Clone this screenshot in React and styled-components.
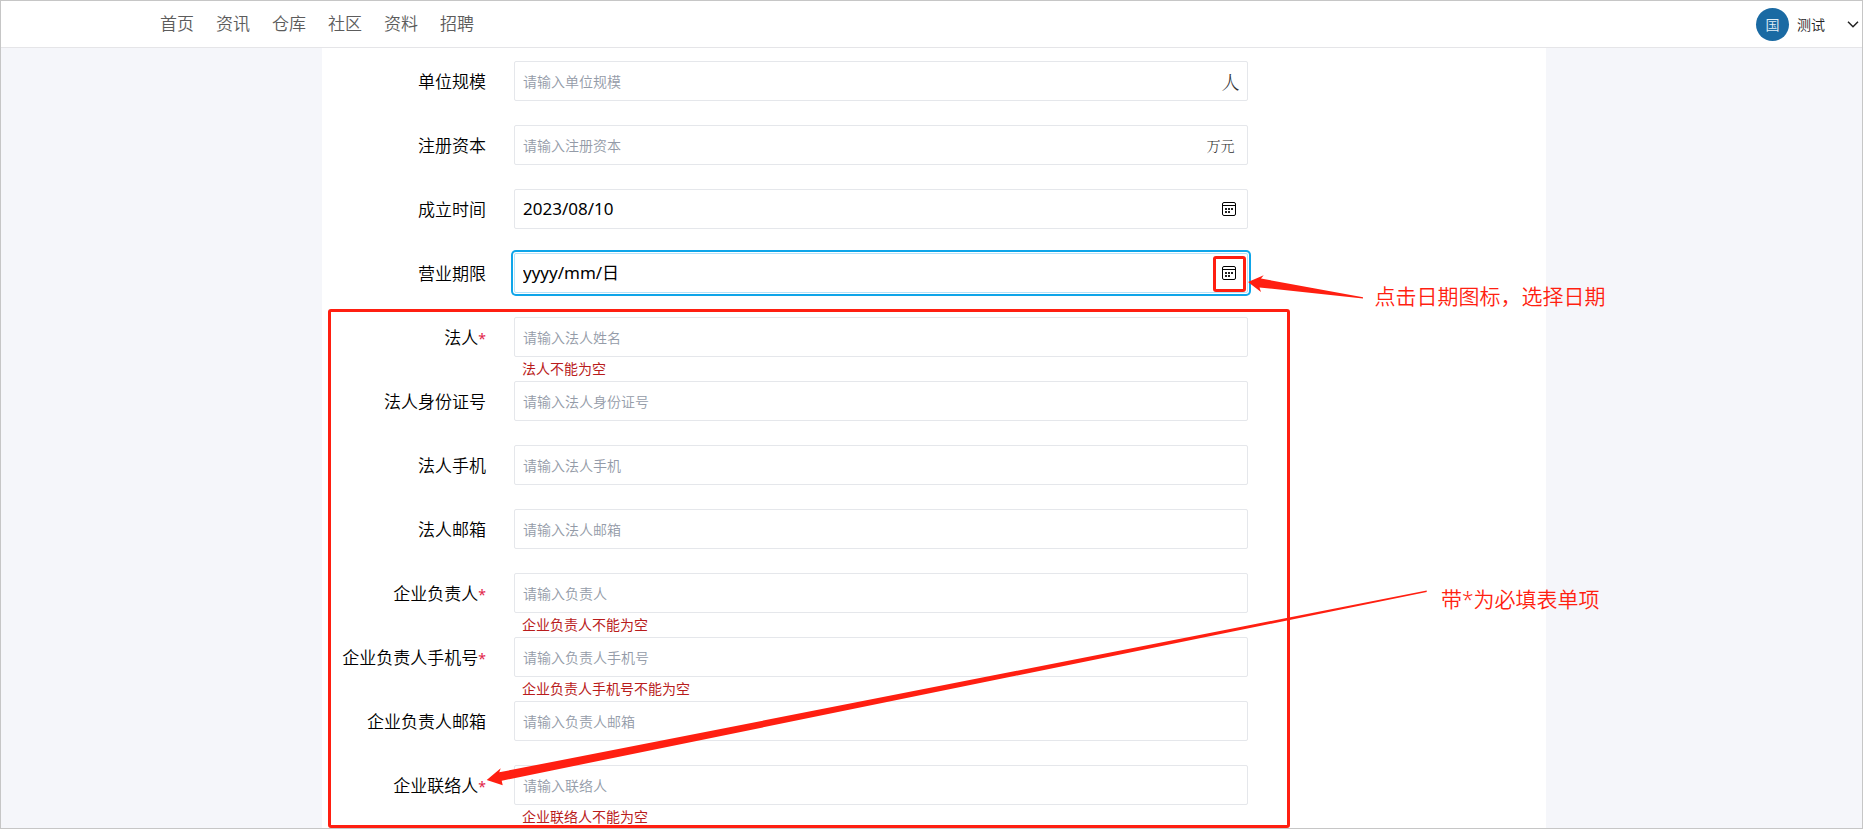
import React, { useState } from 'react';
import styled, { createGlobalStyle, css } from 'styled-components';

const NAV_ITEMS = ['首页', '资讯', '仓库', '社区', '资料', '招聘'];

const BASIC_FIELDS = [
  { id: 'scale', label: '单位规模', placeholder: '请输入单位规模', unit: '人', big: true },
  { id: 'capital', label: '注册资本', placeholder: '请输入注册资本', unit: '万元' },
];

const CONTACT_FIELDS = [
  { id: 'legal', label: '法人', placeholder: '请输入法人姓名', required: true },
  { id: 'legalId', label: '法人身份证号', placeholder: '请输入法人身份证号' },
  { id: 'legalPhone', label: '法人手机', placeholder: '请输入法人手机' },
  { id: 'legalMail', label: '法人邮箱', placeholder: '请输入法人邮箱' },
  { id: 'leader', label: '企业负责人', placeholder: '请输入负责人', required: true },
  { id: 'leaderPhone', label: '企业负责人手机号', placeholder: '请输入负责人手机号', required: true },
  { id: 'leaderMail', label: '企业负责人邮箱', placeholder: '请输入负责人邮箱' },
  { id: 'contact', label: '企业联络人', placeholder: '请输入联络人', required: true },
];

const CalendarIcon = () => (
  <svg width="14" height="14" viewBox="0 0 14 14" fill="none" aria-hidden="true">
    <rect x="0.5" y="0.5" width="13" height="13" rx="1.500" stroke="#000" />
    <path d="M0.5 3.5h13" stroke="#000" />
    <path
      d="M3 6h2v2H3zM6 6h2v2H6zM9 6h2v2H9zM3 9h2v2H3zM6 9h2v2H6z"
      fill="#222"
    />
  </svg>
);

const Field = ({ id, label, placeholder, defaultValue, required, active, suffix, children }) => {
  const [value, setValue] = useState(defaultValue || '');

  return (
    <Row>
      <Label htmlFor={id}>
        {label}
        {required && <Star>*</Star>}
      </Label>
      <Control>
        <InputBox $active={active}>
          <Input
            id={id}
            type="text"
            placeholder={placeholder}
            value={value}
            onChange={e => setValue(e.target.value)}
          />
          {suffix}
        </InputBox>
        {required && !value && <ErrorText>{label}不能为空</ErrorText>}
        {children}
      </Control>
    </Row>
  );
};

const App = () => {
  return (
    <Page>
      <GlobalStyle />
      <Header>
        <Nav>
          {NAV_ITEMS.map(item => (
            <NavLink href="#" key={item}>
              {item}
            </NavLink>
          ))}
        </Nav>
        <UserButton type="button">
          <Avatar>国</Avatar>
          <UserName>测试</UserName>
          <svg width="12" height="7" viewBox="0 0 12 7" fill="none" aria-hidden="true">
            <path d="M1 0.700L6 5.700l5-5" stroke="#222" strokeWidth="1.500" />
          </svg>
        </UserButton>
      </Header>
      <Main>
        <Panel>
          {BASIC_FIELDS.map(({ unit, big, ...field }) => (
            <Field key={field.id} {...field} suffix={<Unit $big={big}>{unit}</Unit>} />
          ))}
          <Field
            id="founded"
            label="成立时间"
            defaultValue="2023/08/10"
            suffix={
              <DateButton type="button" aria-label="选择成立时间">
                <CalendarIcon />
              </DateButton>
            }
          />
          <Field
            id="term"
            label="营业期限"
            defaultValue="yyyy/mm/日"
            active
            suffix={
              <DateButton type="button" aria-label="选择营业期限" $marked>
                <CalendarIcon />
              </DateButton>
            }
          >
            <DateNote>
              <svg width="116" height="24" viewBox="0 0 116 24" fill="#ff1f11">
                <path d="M0 7L15.700 0.300L13 3.500L115 22.300V23.500L11.500 12.500L13 17z" />
              </svg>
              <NoteText $low>点击日期图标，选择日期</NoteText>
            </DateNote>
          </Field>
          <MarkedGroup>
            {CONTACT_FIELDS.map(field => (
              <Field key={field.id} {...field}>
                {field.id === 'contact' && (
                  <RequiredNote>
                    <svg width="941" height="198" viewBox="0 0 941 198" fill="#ff1f11">
                      <path d="M0.700 192L14.700 180.300L13.300 184.300L940.700 2.500V4L15.700 192.700L16.700 197.300z" />
                    </svg>
                    <NoteText>带*为必填表单项</NoteText>
                  </RequiredNote>
                )}
              </Field>
            ))}
          </MarkedGroup>
        </Panel>
      </Main>
    </Page>
  );
};

export default App;

const GlobalStyle = createGlobalStyle`
  * {
    box-sizing: border-box;
  }

  body {
    margin: 0;
    font-family: "Noto Sans", "Noto Sans CJK SC", sans-serif;
    font-weight: 350;
    background-color: #f5f6fa;
  }

  button, input {
    font-family: inherit;
    font-weight: inherit;
  }
`;

const Page = styled.div`
  display: flex;
  flex-direction: column;
  height: 100vh;
  border: 1px solid #c6c6c6;
  overflow: hidden;
`;

const Header = styled.header`
  display: flex;
  flex-shrink: 0;
  justify-content: space-between;
  align-items: center;
  height: 47px;
  padding: 0 3px 0 159px;
  border-bottom: 1px solid #e5e5e8;
  background-color: #fff;
`;

const Nav = styled.nav`
  display: flex;
  gap: 22px;
`;

const NavLink = styled.a`
  color: #5c5c5c;
  font-size: 17px;
  line-height: 24px;
  text-decoration: none;
`;

const UserButton = styled.button`
  display: flex;
  align-items: center;
  padding: 0;
  border: 0;
  background: none;
  cursor: pointer;
`;

const Avatar = styled.span`
  width: 33px;
  height: 33px;
  border-radius: 50%;
  color: #e3f0f8;
  font-size: 14px;
  line-height: 33px;
  text-align: center;
  background-color: #1a6aa3;
`;

const UserName = styled.span`
  margin: 0 22px 0 8px;
  color: #222;
  font-size: 14px;
`;

const Main = styled.main`
  flex: 1;
  min-height: 0;
  padding: 0 316px 0 321px;
  background-color: #f5f6fa;
`;

const Panel = styled.form`
  padding-top: 13px;
  background-color: #fff;
`;

const Row = styled.div`
  display: flex;
  gap: 28px;
  height: 64px;
`;

const Label = styled.label`
  width: 164px;
  color: #000;
  font-size: 17px;
  line-height: 42px;
  text-align: right;
  white-space: nowrap;
`;

const Star = styled.span`
  color: #e11d48;
  font-size: 14px;
  font-weight: 400;
`;

const Control = styled.div`
  position: relative;
  width: 60%;
`;

const InputBox = styled.div`
  display: flex;
  align-items: center;
  height: 40px;
  padding: 0 8px;
  border: 1px solid #e5e7eb;
  border-radius: 2px;
  background-color: #fff;
  ${({ $active }) =>
    $active &&
    css`
      border-color: #b5e2fa;
      box-shadow: 0 0 0 1px #fff, 0 0 0 3px #0ea5e9;
    `}
`;

const Input = styled.input`
  flex: 1;
  min-width: 0;
  padding: 0;
  border: 0;
  outline: 0;
  color: #000;
  font-size: 17px;
  font-weight: 400;
  line-height: 24px;
  background: none;

  &::placeholder {
    color: #949ba8;
    font-size: 14px;
    font-weight: 350;
  }
`;

const Unit = styled.span`
  margin-right: ${({ $big }) => ($big ? '0' : '5px')};
  color: #333;
  font-family: "Noto Serif CJK SC", "Noto Sans CJK SC", serif;
  font-size: ${({ $big }) => ($big ? '18px' : '14px')};
  line-height: 24px;
`;

const DateButton = styled.button`
  position: relative;
  display: flex;
  margin-right: 3px;
  padding: 0;
  border: 0;
  background: none;
  cursor: pointer;

  &::after {
    content: '';
    position: absolute;
    display: ${({ $marked }) => ($marked ? 'block' : 'none')};
    inset: -10px -10px -12px -9px;
    border: 3px solid #ff1f11;
    border-radius: 3px;
  }
`;

const ErrorText = styled.p`
  margin: 0;
  padding-left: 8px;
  color: #b91c1c;
  font-size: 14px;
  font-weight: 400;
  line-height: 24px;
`;

const MarkedGroup = styled.div`
  position: relative;

  &::after {
    content: '';
    position: absolute;
    inset: -8px 256px 1px 6px;
    border: 3px solid #ff1f11;
    border-radius: 3px;
    pointer-events: none;
  }
`;

const Note = styled.div`
  position: absolute;
  z-index: 1;
  display: flex;
  align-items: flex-start;
  pointer-events: none;
`;

const DateNote = styled(Note)`
  top: 22px;
  left: 100%;
  gap: 10px;
`;

const RequiredNote = styled(Note)`
  top: -177px;
  left: -28px;
  gap: 14px;
`;

const NoteText = styled.span`
  margin-top: ${({ $low }) => ($low ? '10px' : '0')};
  color: #ff1f11;
  font-size: 21px;
  line-height: 22px;
  white-space: nowrap;
`;
